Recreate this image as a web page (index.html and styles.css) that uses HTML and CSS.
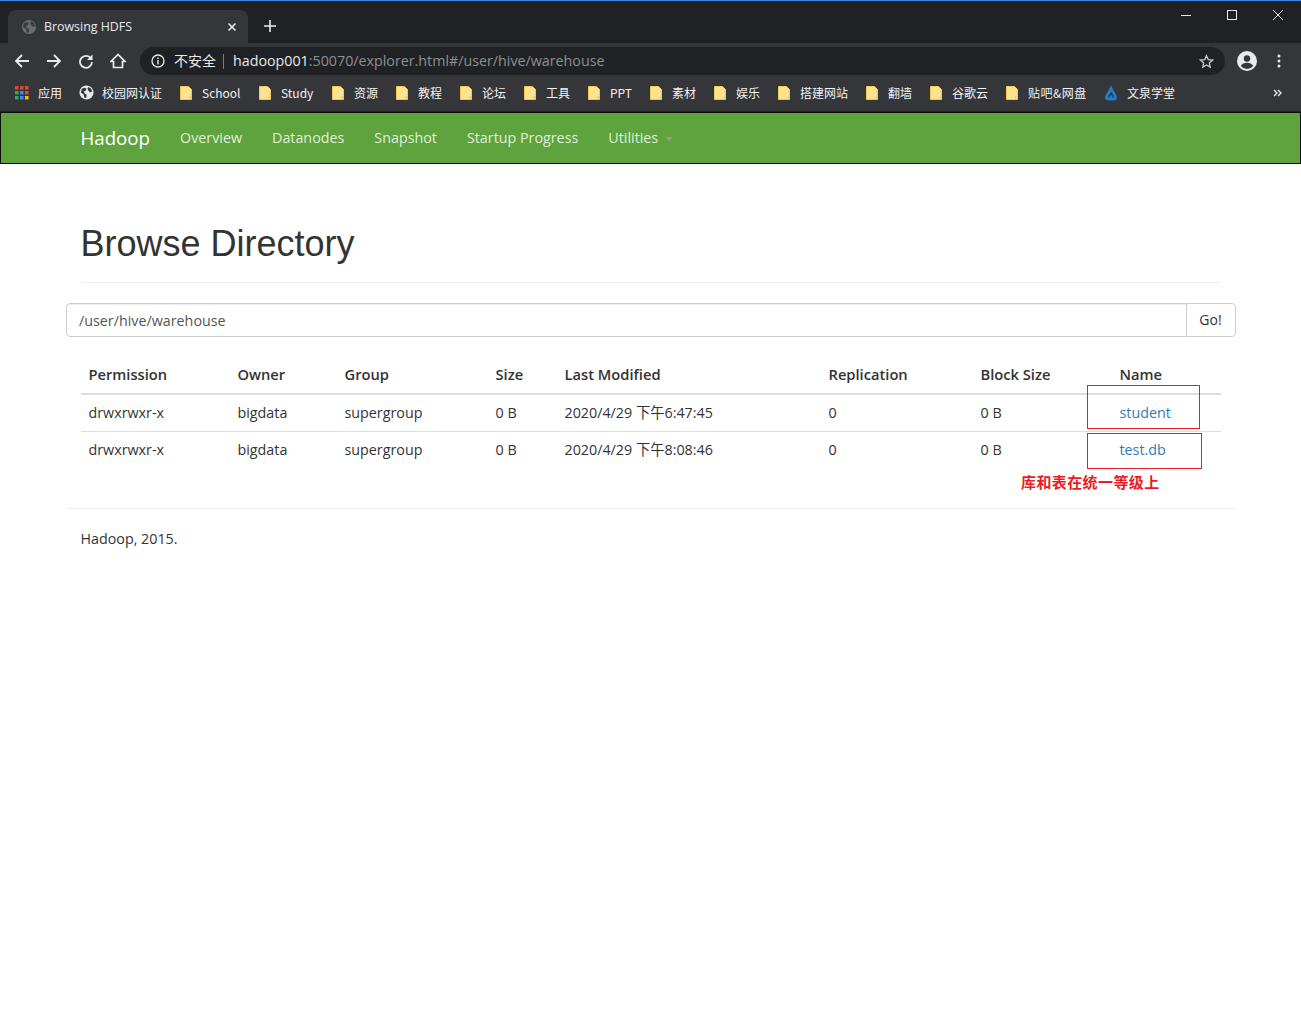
FILE: index.html
```html
<!DOCTYPE html>
<html lang="zh">
<head>
<meta charset="utf-8">
<title>Browsing HDFS</title>
<link rel="stylesheet" href="styles.css">
</head>
<body>
<header class="chrome">
  <div class="tabstrip">
    <div class="tab">
      <svg class="tab-globe" width="16" height="16" viewBox="0 0 16 16"><circle cx="8" cy="8" r="7" fill="#6b6d70"/><path d="M3 4l3-1 2 1-1 2-2 1 1 2 2 1v3l-2 1-1-4-3-2zM10 2l3 2 1 3-2 1-2-2-1-2z" fill="#3a3c40"/></svg>
      <span class="tab-title">Browsing HDFS</span>
      <svg class="tab-close" width="10" height="10" viewBox="0 0 10 10"><path d="M1.500 1.500l7 7M8.500 1.500l-7 7" stroke="#e8eaed" stroke-width="1.600"/></svg>
    </div>
    <svg class="new-tab" width="12" height="12" viewBox="0 0 12 12"><path d="M6 0v12M0 6h12" stroke="#e8eaed" stroke-width="1.600"/></svg>
    <div class="window-controls">
      <svg width="10" height="10" viewBox="0 0 10 10"><path d="M0 5.500h10" stroke="#e8eaed"/></svg>
      <svg width="10" height="10" viewBox="0 0 10 10"><rect x=".5" y=".5" width="9" height="9" fill="none" stroke="#e8eaed"/></svg>
      <svg width="10" height="10" viewBox="0 0 10 10"><path d="M0 0l10 10M10 0L0 10" stroke="#e8eaed"/></svg>
    </div>
  </div>
  <div class="toolbar">
    <svg class="tool" width="16" height="16" viewBox="0 0 16 16"><path d="M15 8H2M8 2L2 8l6 6" fill="none" stroke="#e8eaed" stroke-width="1.800"/></svg>
    <svg class="tool" width="16" height="16" viewBox="0 0 16 16"><path d="M1 8h13M8 2l6 6-6 6" fill="none" stroke="#e8eaed" stroke-width="1.800"/></svg>
    <svg class="tool" width="16" height="16" viewBox="0 0 16 16"><path d="M13 5.500A6 6 0 1 0 14 9" fill="none" stroke="#e8eaed" stroke-width="1.800"/><path d="M14.500 1.500v5.500H9z" fill="#e8eaed"/></svg>
    <svg class="tool" width="16" height="16" viewBox="0 0 16 16"><path d="M8 1.500L1 8.500h2.500v6h9v-6H15z" fill="none" stroke="#e8eaed" stroke-width="1.700"/></svg>
    <div class="omnibox">
      <svg width="14" height="14" viewBox="0 0 14 14"><circle cx="7" cy="7" r="6" fill="none" stroke="#e8eaed" stroke-width="1.300"/><path d="M7 6v4.500M7 3.500v1.500" stroke="#e8eaed" stroke-width="1.400"/></svg>
      <span class="insecure">不安全</span>
      <span class="omni-sep"></span>
      <span class="url"><span class="url-host">hadoop001</span>:50070/explorer.html#/user/hive/warehouse</span>
      <svg class="star" width="15" height="15" viewBox="0 0 16 16"><path d="M8 1.800l1.900 4.200 4.500.5-3.400 3 1 4.500L8 11.700 4 14l1-4.500-3.400-3 4.500-.5z" fill="none" stroke="#c4c6c9" stroke-width="1.400"/></svg>
    </div>
    <svg class="avatar" width="20" height="20" viewBox="0 0 20 20"><circle cx="10" cy="10" r="10" fill="#e8eaed"/><circle cx="10" cy="7.500" r="3.200" fill="#35363a"/><path d="M3.800 15c1.200-2.200 3.500-3.200 6.200-3.200s5 1 6.200 3.200A8 8 0 0 1 10 18a8 8 0 0 1-6.200-3z" fill="#35363a"/></svg>
    <svg class="menu-dots" width="4" height="14" viewBox="0 0 4 14"><circle cx="2" cy="2" r="1.500" fill="#e8eaed"/><circle cx="2" cy="7" r="1.500" fill="#e8eaed"/><circle cx="2" cy="12" r="1.500" fill="#e8eaed"/></svg>
  </div>
  <div class="bookmarks">
    <a class="bm w-apps"><svg width="14" height="14" viewBox="0 0 14 14"><g><rect x="0" y="0" width="3.500" height="3.500" fill="#ea4335"/><rect x="5" y="0" width="3.500" height="3.500" fill="#ea4335"/><rect x="10" y="0" width="3.500" height="3.500" fill="#ea4335"/><rect x="0" y="5" width="3.500" height="3.500" fill="#34a853"/><rect x="5" y="5" width="3.500" height="3.500" fill="#4285f4"/><rect x="10" y="5" width="3.500" height="3.500" fill="#ea4335"/><rect x="0" y="10" width="3.500" height="3.500" fill="#34a853"/><rect x="5" y="10" width="3.500" height="3.500" fill="#4285f4"/><rect x="10" y="10" width="3.500" height="3.500" fill="#fbbc05"/></g></svg><span>应用</span></a>
    <a class="bm w-campus"><svg width="15" height="15" viewBox="0 0 16 16"><circle cx="8" cy="8" r="7.500" fill="#e8eaed"/><path d="M3 4l3-1 2 1-1 2-2 1 1 2 2 1v3l-2 1-1-4-3-2zM10 2l3 2 1 3-2 1-2-2-1-2z" fill="#35363a"/></svg><span>校园网认证</span></a>
    <a class="bm w-school"><svg class="folder" viewBox="0 0 12 14"><use href="#f"/></svg><span>School</span></a>
    <a class="bm w-study"><svg class="folder" viewBox="0 0 12 14"><use href="#f"/></svg><span>Study</span></a>
    <a class="bm w-two"><svg class="folder" viewBox="0 0 12 14"><use href="#f"/></svg><span>资源</span></a>
    <a class="bm w-two"><svg class="folder" viewBox="0 0 12 14"><use href="#f"/></svg><span>教程</span></a>
    <a class="bm w-two"><svg class="folder" viewBox="0 0 12 14"><use href="#f"/></svg><span>论坛</span></a>
    <a class="bm w-two"><svg class="folder" viewBox="0 0 12 14"><use href="#f"/></svg><span>工具</span></a>
    <a class="bm w-ppt"><svg class="folder" viewBox="0 0 12 14"><use href="#f"/></svg><span>PPT</span></a>
    <a class="bm w-two"><svg class="folder" viewBox="0 0 12 14"><use href="#f"/></svg><span>素材</span></a>
    <a class="bm w-two"><svg class="folder" viewBox="0 0 12 14"><use href="#f"/></svg><span>娱乐</span></a>
    <a class="bm w-four"><svg class="folder" viewBox="0 0 12 14"><use href="#f"/></svg><span>搭建网站</span></a>
    <a class="bm w-two"><svg class="folder" viewBox="0 0 12 14"><use href="#f"/></svg><span>翻墙</span></a>
    <a class="bm w-three"><svg class="folder" viewBox="0 0 12 14"><use href="#f"/></svg><span>谷歌云</span></a>
    <a class="bm w-tieba"><svg class="folder" viewBox="0 0 12 14"><use href="#f"/></svg><span>贴吧&amp;网盘</span></a>
    <a class="bm w-wen"><svg width="14" height="17" viewBox="0 0 14 17"><path d="M7 .5C7.500 3 9 5.500 10.500 8c1.800 3 3 5 2.200 7-.8 1.300-3 1.500-5.700 1.500S2.100 16.300 1.300 15c-.8-2 .4-4 2.200-7C5 5.500 6.500 3 7 .5z" fill="#1f7fd0"/><path d="M7.200 7.500c.7 1.500 1.600 2.700 2.300 4.200.5 1.200.3 2-.4 2.300L7 10.500 5 14c-.9-.3-1.100-1.200-.5-2.400.8-1.500 2-2.600 2.700-4.100z" fill="#35363a"/></svg><span>文泉学堂</span></a>
    <svg class="more" width="9" height="8" viewBox="0 0 9 8"><path d="M1 1l3 3-3 3M5 1l3 3-3 3" fill="none" stroke="#e8eaed" stroke-width="1.400"/></svg>
  </div>
  <svg class="defs" width="0" height="0"><defs><g id="f"><path d="M.5.500h8l3 3v10H.5z" fill="#fde293" stroke="#f2c94c"/><path d="M9 13v-2.500h2.500z" fill="#f2c94c"/></g></defs></svg>
</header>

<nav class="navbar">
  <a class="brand">Hadoop</a>
  <a class="nav-link">Overview</a>
  <a class="nav-link">Datanodes</a>
  <a class="nav-link">Snapshot</a>
  <a class="nav-link">Startup Progress</a>
  <a class="nav-link">Utilities <span class="caret"></span></a>
</nav>

<main class="container">
  <div class="page-header"><h1>Browse Directory</h1></div>
  <div class="input-group">
    <div class="path-input">/user/hive/warehouse</div>
    <button class="go">Go!</button>
  </div>
  <div class="table-wrap">
    <table class="listing">
      <thead>
        <tr><th class="c1">Permission</th><th class="c2">Owner</th><th class="c3">Group</th><th class="c4">Size</th><th class="c5">Last Modified</th><th class="c6">Replication</th><th class="c7">Block Size</th><th class="c8">Name</th></tr>
      </thead>
      <tbody>
        <tr><td>drwxrwxr-x</td><td>bigdata</td><td>supergroup</td><td>0 B</td><td>2020/4/29 下午6:47:45</td><td>0</td><td>0 B</td><td><a>student</a></td></tr>
        <tr><td>drwxrwxr-x</td><td>bigdata</td><td>supergroup</td><td>0 B</td><td>2020/4/29 下午8:08:46</td><td>0</td><td>0 B</td><td><a>test.db</a></td></tr>
      </tbody>
    </table>
  </div>
  <hr class="rule">
  <footer class="foot">Hadoop, 2015.</footer>
  <div class="mark mark-a"></div>
  <div class="mark mark-b"></div>
  <div class="note">库和表在统一等级上</div>
</main>
</body>
</html>
```
FILE: styles.css
```css
* { box-sizing: border-box; }
html, body { margin: 0; padding: 0; background: #fff; }
body { font-family: "Open Sans", "Noto Sans CJK SC", sans-serif; font-size: 14.3px; color: #333; height: 1032px; overflow: hidden; }

.chrome { background: #35363a; color: #e8eaed; height: 112px; }
.tabstrip { position: relative; height: 43px; background: #202124; border-top: 1px solid #3b82e6; display: flex; align-items: flex-end; }
.tab { width: 240px; height: 33px; margin-left: 8px; background: #35363a; border-radius: 8px 8px 0 0; display: flex; align-items: center; padding: 0 11px 0 13px; }
.tab-globe { flex: none; }
.tab-title { font-size: 12.400px; margin-left: 7px; flex: 1; color: #e8eaed; white-space: nowrap; }
.tab-close { flex: none; }
.new-tab { margin: 0 0 11px 16px; }
.window-controls { position: absolute; top: 9px; right: 18px; display: flex; gap: 36px; }

.toolbar { height: 32px; display: flex; align-items: center; padding: 4px 0 0 14px; }
.tool { margin-right: 16px; flex: none; }
.toolbar .tool:nth-child(4) { margin-right: 14px; }
.omnibox { width: 1085px; height: 28px; border-radius: 14px; background: #202124; display: flex; align-items: center; padding: 0 11px; }
.insecure { font-size: 14px; line-height: 18px; margin: 0 0 2px 9px; color: #e8eaed; font-family: "Noto Sans CJK SC", sans-serif; }
.omni-sep { width: 1px; height: 15px; background: #7b7d80; margin: 0 9px 0 7px; }
.url { font-size: 14.280px; line-height: 18px; margin-bottom: 1px; color: #8e9094; flex: 1; white-space: nowrap; }
.url-host { color: #e8eaed; }
.star { flex: none; }
.avatar { margin-left: 12px; flex: none; }
.menu-dots { margin-left: 20px; flex: none; }

.bookmarks { position: relative; height: 37px; display: flex; align-items: center; padding: 0 0 1px 15px; border-bottom: 1px solid #1f2023; }
.bm { display: flex; align-items: center; font-size: 12px; color: #f1f3f4; white-space: nowrap; flex: none; font-family: "Noto Sans CJK SC", "Open Sans", sans-serif; }
.bm span { margin-left: 9px; }
.bm .folder + span { margin-left: 10px; }
.w-campus span { margin-left: 8px; }
.w-tieba span { letter-spacing: .5px; }
.folder { width: 12px; height: 14px; flex: none; }
.w-apps { width: 64px; }
.w-campus { width: 101px; }
.w-school { width: 79px; }
.w-study { width: 73px; }
.w-two { width: 64px; }
.w-ppt { width: 62px; }
.w-four { width: 88px; }
.w-three { width: 76px; }
.w-tieba { width: 98px; }
.w-wen { width: 90px; }
.more { position: absolute; right: 19px; top: 14px; }

.navbar { height: 52px; background: #5fa33e; border: 1px solid #0b0f08; display: flex; align-items: center; padding: 0 0 2px 79.500px; }
.brand { font-size: 18.700px; color: #fff; margin-right: 15px; }
.nav-link { font-size: 14.300px; color: #dff0d8; margin: 0 15px; white-space: nowrap; }
.caret { display: inline-block; width: 0; height: 0; margin-left: 3px; vertical-align: middle; border-top: 4px solid #9a9a9a; border-left: 4px solid transparent; border-right: 4px solid transparent; }

.container { position: relative; width: 1170px; margin-left: 66px; padding: 60px 15px 0; }
.page-header { height: 59px; border-bottom: 1px solid #eee; }
h1 { margin: 0 0 0 -.5px; font-family: "Liberation Sans", Arial, sans-serif; font-weight: 400; font-size: 36px; line-height: 40px; color: #333; }
.input-group { margin: 20px -15px 0; height: 34px; display: flex; }
.path-input { flex: 1; height: 34px; padding: 0 12px; line-height: 34px; font-size: 14.300px; color: #555; border: 1px solid #ccc; border-radius: 4px 0 0 4px; box-shadow: inset 0 1px 1px rgba(0,0,0,.075); }
.go { width: 50px; height: 34px; margin-left: -1px; background: #fff; border: 1px solid #ccc; border-radius: 0 4px 4px 0; font: 14px "Open Sans", sans-serif; color: #333; padding: 0 1px 2px 0; }
.table-wrap { margin-top: 20px; }
.listing { width: 1140px; border-collapse: collapse; table-layout: fixed; margin-left: -.5px; }
.listing th { height: 37px; padding: 0 8px 2px; text-align: left; font-weight: 600; font-size: 14.700px; color: #333; border-bottom: 2px solid #ddd; }
.listing td { height: 38px; padding: 0 8px; line-height: 20px; border-top: 1px solid #ddd; white-space: nowrap; font-size: 14.300px; }
.listing tbody tr:first-child td { border-top: 0; height: 37px; }
.listing a { color: #337ab7; }
.c1 { width: 149px; } .c2 { width: 107px; } .c3 { width: 151px; } .c4 { width: 69px; } .c5 { width: 264px; } .c6 { width: 152px; } .c7 { width: 139px; } .c8 { width: 109px; }
.rule { margin: 39px -15px 0; border: 0; border-top: 1px solid #eee; height: 0; }
.foot { margin-top: 20px; margin-left: -.5px; font-size: 14.300px; line-height: 20px; }
.mark { position: absolute; border: 1px solid #ed1c24; }
.mark-a { left: 1021px; top: 221px; width: 113px; height: 44px; }
.mark-b { left: 1021px; top: 269px; width: 115px; height: 36px; }
.note { position: absolute; left: 955px; top: 308px; font-size: 15px; font-weight: 700; color: #ed1c24; white-space: nowrap; font-family: "Noto Sans CJK SC", sans-serif; line-height: 20px; letter-spacing: .4px; }
```
